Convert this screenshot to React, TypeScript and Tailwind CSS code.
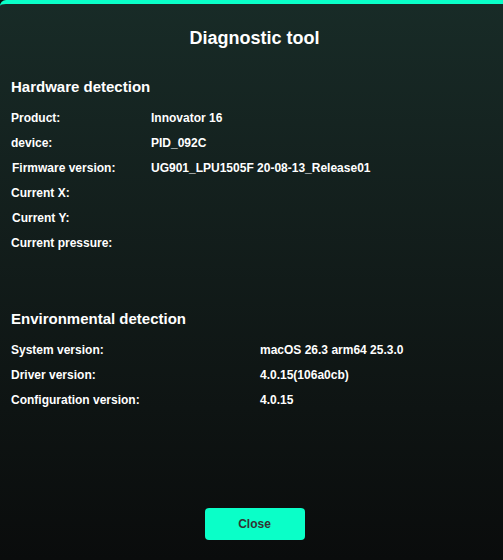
import React from "react";

const hw: [string, string, boolean][] = [
  ["Product:", "Innovator 16", false],
  ["device:", "PID_092C", false],
  ["Firmware version:", "UG901_LPU1505F 20-08-13_Release01", true],
  ["Current X:", "", false],
  ["Current Y:", "", true],
  ["Current pressure:", "", false],
];

const env: [string, string][] = [
  ["System version:", "macOS 26.3 arm64 25.3.0"],
  ["Driver version:", "4.0.15(106a0cb)"],
  ["Configuration version:", "4.0.15"],
];

export default function App() {
  return (
    <div
      className="w-[503px] h-[560px] overflow-hidden bg-[#0a0c0c] text-white"
      style={{ fontFamily: '"Liberation Sans", Arial, sans-serif' }}
    >
      <div className="w-[509px] h-[560px] flex flex-col rounded-tl-[6px] border-t-4 border-[#0affc8] bg-gradient-to-b from-[#182b27] to-[#0a0c0c]">
        <div className="mt-[24px] h-[20px] leading-[20px] text-[18px] font-bold text-center">
          Diagnostic tool
        </div>
        <div className="mt-[30px] px-[11px] h-[18px] leading-[18px] text-[15px] font-bold">
          Hardware detection
        </div>
        <div className="mt-[10px] flex flex-col">
          {hw.map(([k, v, shift]) => (
            <div key={k} className="flex h-[25px] leading-[25px] text-[12px] font-bold px-[11px]">
              <div className={`w-[140px] ${shift ? "pl-[1px]" : ""}`}>{k}</div>
              <div>{v}</div>
            </div>
          ))}
        </div>
        <div className="mt-[54px] px-[11px] h-[18px] leading-[18px] text-[15px] font-bold">
          Environmental detection
        </div>
        <div className="mt-[10px] flex flex-col">
          {env.map(([k, v]) => (
            <div key={k} className="flex h-[25px] leading-[25px] text-[12px] font-bold px-[11px]">
              <div className="w-[249px]">{k}</div>
              <div>{v}</div>
            </div>
          ))}
        </div>
        <div className="flex-1" />
        <div className="flex justify-center mb-[20px]">
          <button className="w-[100px] h-[32px] rounded-[4px] bg-[#0affc8] text-[#333] text-[12px] font-bold">
            Close
          </button>
        </div>
      </div>
    </div>
  );
}
